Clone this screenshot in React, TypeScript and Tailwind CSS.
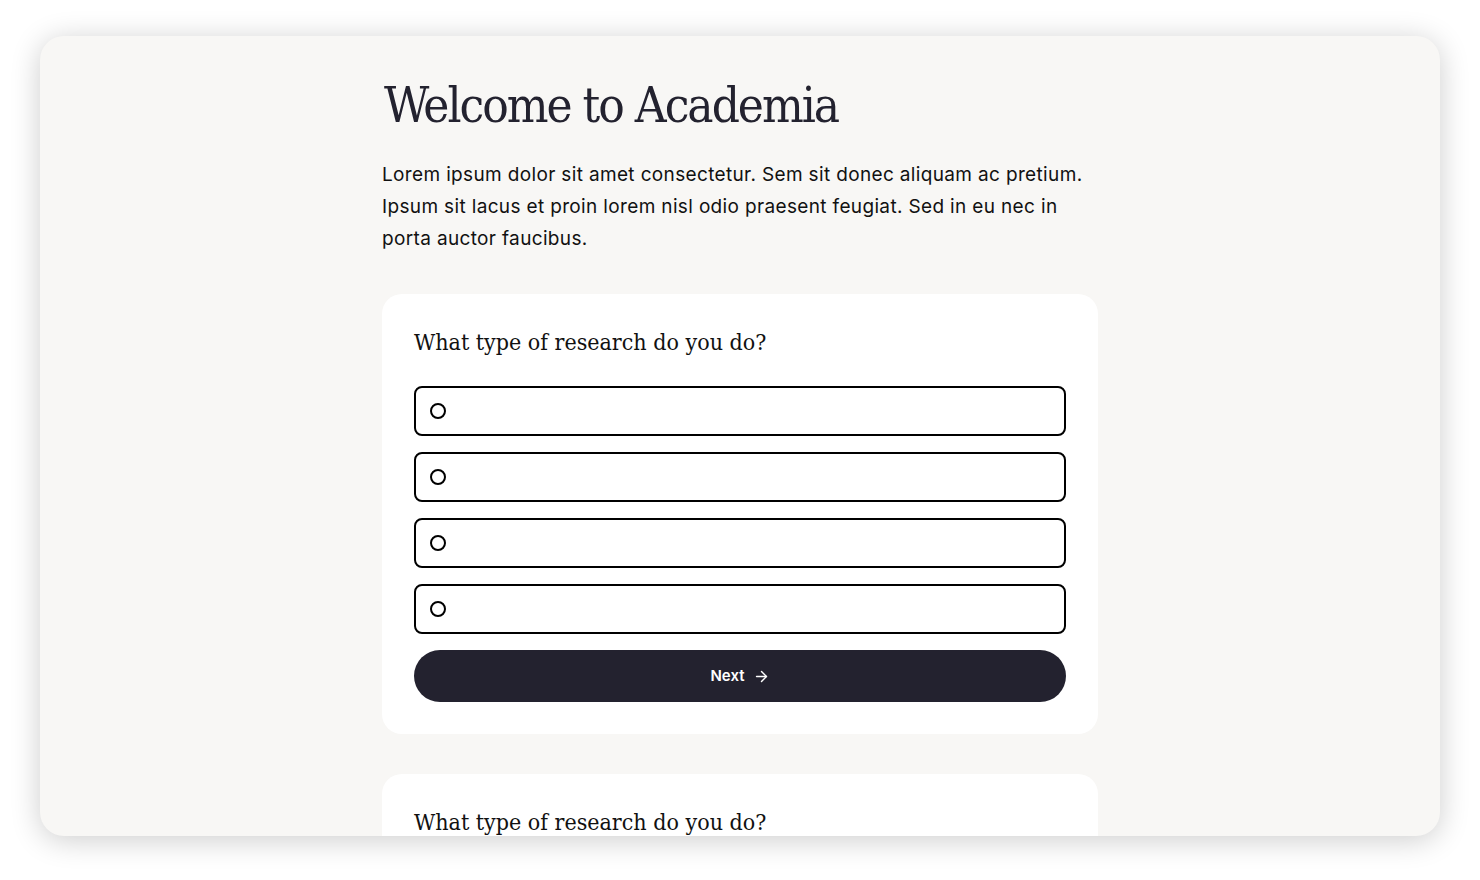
import { ArrowRight } from 'lucide-react';

function Option() {
  return (
    <label className="flex h-[50px] w-full cursor-pointer items-center rounded-lg border-2 border-black bg-white px-[14px]">
      <span className="h-4 w-4 rounded-full border-2 border-black" />
    </label>
  );
}

function QuestionCard({ withActions = true }: { withActions?: boolean }) {
  return (
    <section className="rounded-[20px] bg-white px-8 pb-8 pt-8">
      <h2 className="mb-7 font-['DejaVu_Serif_Condensed','Liberation_Serif',serif] text-[23px] leading-8 text-[#111]">
        What type of research do you do?
      </h2>
      {withActions ? (
        <>
          <div className="flex flex-col gap-4">
            <Option />
            <Option />
            <Option />
            <Option />
          </div>
          <button
            type="button"
            className="mt-4 flex h-[52px] w-full items-center justify-center gap-2 rounded-full bg-[#23222f] font-['Inter',sans-serif] text-[15px] font-semibold text-white"
          >
            Next
            <ArrowRight size={17} strokeWidth={2} />
          </button>
        </>
      ) : (
        <div className="flex flex-col gap-4">
          <Option />
          <Option />
        </div>
      )}
    </section>
  );
}

export default function App() {
  return (
    <div className="min-h-screen bg-white px-10 pt-9">
      <div className="h-[800px] overflow-hidden rounded-3xl bg-[#f8f7f5] shadow-[0_4px_30px_rgba(0,0,0,0.2)]">
        <div className="mx-auto w-[716px] pt-[38px]">
          <h1 className="pl-[2px] font-['DejaVu_Serif_Condensed','Liberation_Serif',serif] text-[49px] leading-[64px] tracking-[-2px] text-[#23222f]">
            Welcome to Academia
          </h1>
          <p className="mt-[21px] font-['Inter',sans-serif] text-[19px] leading-8 tracking-[0.35px] text-[#111]">
            Lorem ipsum dolor sit amet consectetur. Sem sit donec aliquam ac pretium. Ipsum sit lacus et proin lorem nisl odio praesent feugiat. Sed in eu nec in porta auctor faucibus.
          </p>
          <div className="mt-[39px] flex flex-col gap-10">
            <QuestionCard />
            <QuestionCard withActions={false} />
          </div>
        </div>
      </div>
    </div>
  );
}
